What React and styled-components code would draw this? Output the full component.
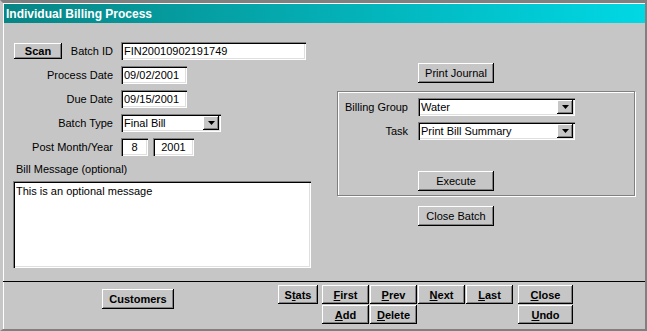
import React from "react"
import styled, { createGlobalStyle } from "styled-components"

const GlobalStyle = createGlobalStyle`
  html, body {
    margin: 0;
    padding: 0;
    background: #c6c6c6;
  }
  * {
    box-sizing: border-box;
  }
`

const face = "#c6c6c6"
const font = `"Liberation Sans", Arial, sans-serif`

const Window = styled.div`
  width: 647px;
  height: 331px;
  background: ${face};
  border-style: solid;
  border-width: 3px 2px 2px 3px;
  border-color: #808080 #808080 #808080 ${face};
  font-family: ${font};
  font-size: 11px;
  color: #000;
`

const Inner = styled.div`
  height: 100%;
  border-top: 1px solid #fff;
  border-left: 1px solid #fff;
  display: flex;
  flex-direction: column;
`

const TitleBar = styled.div`
  height: 19px;
  padding-left: 2px;
  display: flex;
  align-items: center;
  background: linear-gradient(to right, #078585, #00d8e4);
  color: #fff;
  font-weight: bold;
  font-size: 12px;
`

const Main = styled.div`
  height: 258px;
  display: flex;
`

const LeftCol = styled.div`
  width: 298px;
  margin-left: 9px;
  padding-top: 19px;
  display: flex;
  flex-direction: column;
`

const RightCol = styled.div`
  width: 298px;
  margin-left: 26px;
  padding-top: 40px;
  display: flex;
  flex-direction: column;
  align-items: flex-start;
`

const FormGrid = styled.div`
  display: grid;
  grid-template-columns: ${(p) => p.$label}px auto;
  grid-auto-rows: 18px;
  column-gap: ${(p) => p.$gap}px;
  row-gap: 6px;
  align-items: center;
`

const Label = styled.div`
  display: flex;
  align-items: center;
  justify-content: ${(p) => (p.$split ? "space-between" : "flex-end")};
  height: 100%;
  white-space: nowrap;
  padding-right: 1px;
`

const Button = styled.button`
  width: ${(p) => p.$w}px;
  height: ${(p) => p.$h || 20}px;
  margin: 0;
  padding: 0;
  border: none;
  background: ${face};
  font-family: ${font};
  font-size: 11px;
  font-weight: ${(p) => (p.$bold ? "bold" : "normal")};
  color: #000;
  box-shadow: inset -1px -1px #000, inset 1px 1px #fff, inset -2px -2px #808080;
  display: flex;
  align-items: center;
  justify-content: center;
  cursor: default;
  flex-shrink: 0;
`

const Field = styled.div`
  width: ${(p) => p.$w}px;
  height: 18px;
  background: #fff;
  box-shadow: inset 1px 1px #808080, inset 2px 2px #000, inset -1px -1px #fff,
    inset -2px -2px #dfdfdf;
  padding: 0 3px;
  display: flex;
  align-items: center;
  justify-content: ${(p) => (p.$center ? "center" : "flex-start")};
  white-space: nowrap;
  overflow: hidden;
`

const Pair = styled.div`
  display: flex;
  gap: 5px;
`

const SelectBox = styled(Field)`
  padding-right: 2px;
  justify-content: space-between;
`

const ArrowButton = styled.div`
  width: 16px;
  height: 14px;
  background: ${face};
  box-shadow: inset -1px -1px #000, inset 1px 1px #fff, inset -2px -2px #808080;
  display: flex;
  align-items: center;
  justify-content: center;
`

const Caption = styled.div`
  height: 14px;
  margin-top: 6px;
  margin-left: 3px;
  display: flex;
  align-items: center;
`

const Memo = styled.div`
  width: 298px;
  height: 87px;
  margin-top: 5px;
  background: #fff;
  box-shadow: inset 1px 1px #808080, inset 2px 2px #000, inset -1px -1px #fff,
    inset -2px -2px #dfdfdf;
  padding: 4px 3px;
`

const GroupBox = styled.div`
  width: 298px;
  height: 105px;
  margin-top: 8px;
  border: 1px solid #808080;
  box-shadow: inset 1px 1px #fff, 1px 1px #fff;
  padding: 6px 0 0 9px;
  display: flex;
  flex-direction: column;
`

const Separator = styled.div`
  height: 1px;
  margin-left: -1px;
  background: #000;
`

const Footer = styled.div`
  flex: 1;
  display: flex;
  align-items: flex-start;
  padding-left: 98px;
`

const NavBlock = styled.div`
  margin-left: 104px;
  margin-top: 3px;
  display: flex;
  gap: 4px;
`

const NavGrid = styled.div`
  display: grid;
  grid-template-columns: repeat(4, 47px);
  grid-auto-rows: 19px;
  gap: 1px;
  margin-right: 1px;
`

const NavCol = styled.div`
  display: flex;
  flex-direction: column;
  gap: 1px;
`

const Arrow = () => (
  <svg width="7" height="4" viewBox="0 0 7 4">
    <path d="M0 0h7L3.5 4z" fill="#000" />
  </svg>
)

const Select = ({ w, value }) => (
  <SelectBox $w={w}>
    <span>{value}</span>
    <ArrowButton>
      <Arrow />
    </ArrowButton>
  </SelectBox>
)

const Nav = ({ children, w = 47 }) => (
  <Button $bold $w={w} $h={19}>
    {children}
  </Button>
)

export default function App() {
  return (
    <>
      <GlobalStyle />
      <Window>
        <Inner>
          <TitleBar>Individual Billing Process</TitleBar>
          <Main>
            <LeftCol>
              <FormGrid $label={101} $gap={7}>
                <Label $split>
                  <Button $bold $w={48} $h={16} style={{ marginLeft: 1 }}>
                    Scan
                  </Button>
                  <span>Batch ID</span>
                </Label>
                <Field $w={185}>FIN20010902191749</Field>
                <Label>Process Date</Label>
                <Field $w={66}>09/02/2001</Field>
                <Label>Due Date</Label>
                <Field $w={66}>09/15/2001</Field>
                <Label>Batch Type</Label>
                <Select w={100} value="Final Bill" />
                <Label>Post Month/Year</Label>
                <Pair>
                  <Field $w={27} $center>
                    8
                  </Field>
                  <Field $w={41} $center>
                    2001
                  </Field>
                </Pair>
              </FormGrid>
              <Caption>Bill Message (optional)</Caption>
              <Memo>This is an optional message</Memo>
            </LeftCol>
            <RightCol>
              <Button $w={76} style={{ marginLeft: 81 }}>
                Print Journal
              </Button>
              <GroupBox>
                <FormGrid $label={62} $gap={9}>
                  <Label>Billing Group</Label>
                  <Select w={157} value="Water" />
                  <Label>Task</Label>
                  <Select w={157} value="Print Bill Summary" />
                </FormGrid>
                <Button $w={76} style={{ marginLeft: 71, marginTop: 31 }}>
                  Execute
                </Button>
              </GroupBox>
              <Button $w={76} style={{ marginLeft: 81, marginTop: 10 }}>
                Close Batch
              </Button>
            </RightCol>
          </Main>
          <Separator />
          <Footer>
            <Button $bold $w={72} style={{ marginTop: 7 }}>
              Customers
            </Button>
            <NavBlock>
              <Nav w={40}>
                <span>
                  S<u>t</u>ats
                </span>
              </Nav>
              <NavGrid>
                <Nav>
                  <span>
                    <u>F</u>irst
                  </span>
                </Nav>
                <Nav>
                  <span>
                    <u>P</u>rev
                  </span>
                </Nav>
                <Nav>
                  <span>
                    <u>N</u>ext
                  </span>
                </Nav>
                <Nav>
                  <span>
                    <u>L</u>ast
                  </span>
                </Nav>
                <Nav>
                  <span>
                    <u>A</u>dd
                  </span>
                </Nav>
                <Nav>
                  <span>
                    <u>D</u>elete
                  </span>
                </Nav>
              </NavGrid>
              <NavCol>
                <Nav w={55}>
                  <span>
                    <u>C</u>lose
                  </span>
                </Nav>
                <Nav w={55}>
                  <span>
                    <u>U</u>ndo
                  </span>
                </Nav>
              </NavCol>
            </NavBlock>
          </Footer>
        </Inner>
      </Window>
    </>
  )
}
